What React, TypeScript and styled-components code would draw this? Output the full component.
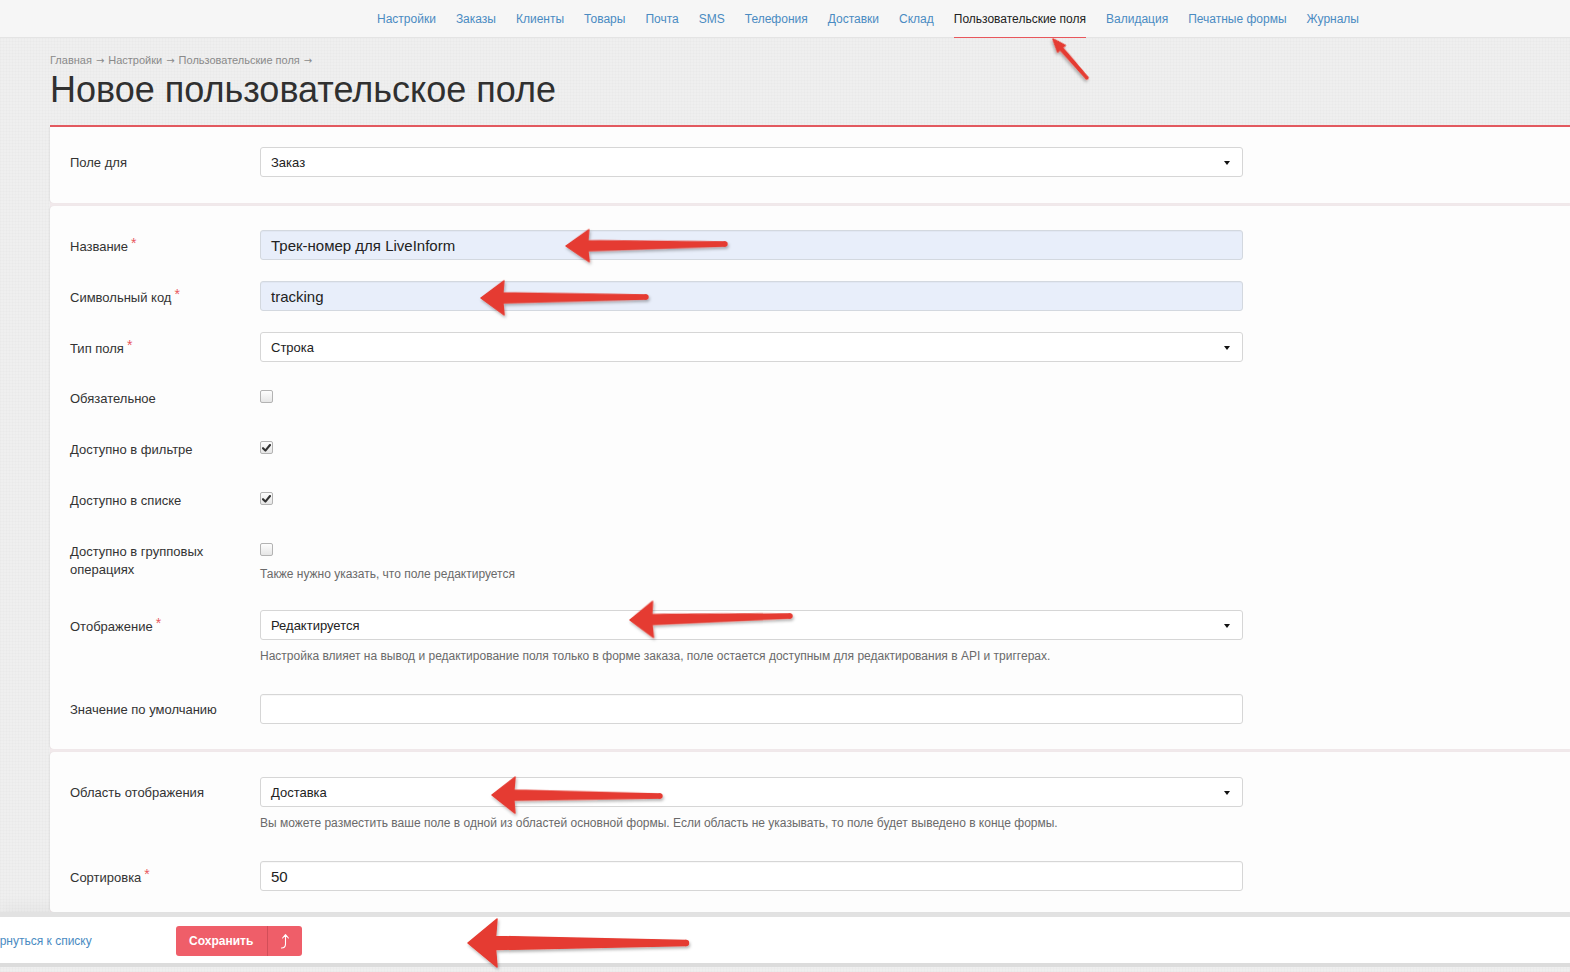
import React from "react";
import styled, { createGlobalStyle, css } from "styled-components";

const GlobalStyle = createGlobalStyle`
  html, body { margin: 0; padding: 0; }
  body {
    background: #efefef;
    background-image:
      repeating-linear-gradient(0deg, rgba(0,0,0,0.012) 0 1px, transparent 1px 3px),
      repeating-linear-gradient(90deg, rgba(0,0,0,0.012) 0 1px, transparent 1px 3px);
    font-family: "Liberation Sans", Arial, sans-serif;
    color: #333;
    overflow: hidden;
  }
  * { box-sizing: border-box; }
`;

const Page = styled.div`
  position: relative;
  width: 1570px;
  height: 972px;
  overflow: hidden;
`;

const TopNav = styled.nav`
  height: 38px;
  background: #f6f6f6;
  border-bottom: 1px solid #e4e4e4;
  display: flex;
  justify-content: flex-end;
  align-items: stretch;
  padding-right: 211px;
  gap: 20px;
`;

const NavLink = styled.a<{ $active?: boolean }>`
  display: flex;
  align-items: center;
  font-size: 12px;
  color: #4a8bc2;
  text-decoration: none;
  padding-top: 1px;
  border-bottom: 1px solid transparent;
  margin-bottom: -1px;
  ${(p) =>
    p.$active &&
    css`
      color: #222;
      border-bottom-color: #e8575c;
    `}
`;

const Header = styled.header`
  padding: 15px 0 0 50px;
`;

const Breadcrumb = styled.div`
  font-size: 11px;
  line-height: 14px;
  height: 14px;
  color: #8a8a8a;
  white-space: nowrap;
`;

const CrumbArrow = styled.span`
  font-family: "DejaVu Sans", sans-serif;
  font-size: 10px;
  line-height: 10px;
  margin: 0 4px;
`;

const Title = styled.h1`
  margin: 3px 0 15px;
  font-size: 36px;
  line-height: 40px;
  font-weight: normal;
  color: #303030;
`;

const Cards = styled.div`
  margin-left: 50px;
  border-top: 2px solid #e35a60;
  background: #f1e9eb;
  display: flex;
  flex-direction: column;
  gap: 3px;
`;

const Card = styled.section<{ $pt: number; $pb: number; $first?: boolean }>`
  background: #fdfdfd;
  padding: ${(p) => p.$pt}px 0 ${(p) => p.$pb}px;
  border-radius: ${(p) => (p.$first ? "0 0 0 4px" : "4px 0 0 4px")};
  box-shadow: -1px 0 1px rgba(0, 0, 0, 0.05);
`;

const Group = styled.div`
  display: grid;
  grid-template-columns: 190px 983px;
  padding-left: 20px;
  margin-bottom: 21px;
`;

const Label = styled.label`
  font-size: 13px;
  line-height: 18px;
  padding-top: 7px;
  color: #333;
  padding-right: 20px;
`;

const Req = styled.span`
  color: #e8585e;
  font-size: 14px;
  position: relative;
  top: -3px;
  margin-left: 3px;
`;

const Control = styled.div`
  display: flex;
  flex-direction: column;
`;

const TextInput = styled.div<{ $filled?: boolean }>`
  height: 30px;
  border: 1px solid ${(p) => (p.$filled ? "#d3d8df" : "#d6d6d6")};
  border-radius: 3px;
  background: ${(p) => (p.$filled ? "#e8eefa" : "#fff")};
  font-size: 15px;
  color: #222;
  display: flex;
  align-items: center;
  padding: 0 10px;
  box-shadow: inset 0 1px 1px rgba(0, 0, 0, 0.03);
`;

const Select = styled.div`
  height: 30px;
  border: 1px solid #d6d6d6;
  border-radius: 3px;
  background: #fff;
  font-size: 13px;
  color: #222;
  display: flex;
  align-items: center;
  justify-content: space-between;
  padding: 0 12px 0 10px;
`;

const Caret = styled.span`
  width: 0;
  height: 0;
  border-left: 3.5px solid transparent;
  border-right: 3.5px solid transparent;
  border-top: 4px solid #111;
  margin-top: 1px;
`;

const CheckWrap = styled.div`
  height: 30px;
  padding-top: 7px;
`;

const Checkbox = styled.span`
  display: flex;
  align-items: center;
  justify-content: center;
  width: 13px;
  height: 13px;
  border: 1px solid #b3b3b3;
  border-radius: 2px;
  background: linear-gradient(#fdfdfd, #e6e6e6);
`;

const Help = styled.div<{ $mt: number; $mb: number }>`
  font-size: 12px;
  line-height: 17px;
  color: #6a6a6a;
  margin-top: ${(p) => p.$mt}px;
  margin-bottom: ${(p) => p.$mb}px;
`;

const Footer = styled.footer`
  background: #fff;
  border-top: 5px solid #e2e2e2;
  border-bottom: 4px solid #dcdcdc;
  height: 55px;
  display: flex;
  align-items: center;
  padding-top: 2px;
  box-shadow: 0 -8px 12px rgba(0, 0, 0, 0.03);
`;

const BackLink = styled.a`
  font-size: 12px;
  color: #4a8bc2;
  margin-left: -15px;
  margin-right: 84px;
  text-decoration: none;
  white-space: nowrap;
`;

const SaveGroup = styled.div`
  display: flex;
  height: 30px;
  border-radius: 3px;
  overflow: hidden;
  background: #ef5e69;
`;

const SaveButton = styled.button`
  width: 92px;
  border: none;
  background: transparent;
  color: #fff;
  font-family: "Liberation Sans", Arial, sans-serif;
  font-weight: bold;
  font-size: 12px;
  padding: 0;
  border-right: 1px solid #d24e58;
`;

const ExtraButton = styled.button`
  width: 34px;
  border: none;
  background: transparent;
  display: flex;
  align-items: center;
  justify-content: center;
  padding: 0;
`;

const Overlay = styled.svg`
  position: absolute;
  top: 0;
  left: 0;
  pointer-events: none;
`;

type Pt = [number, number];
const Arrow = ({
  tip,
  tail,
  h,
  hl,
  w1,
  w2,
}: {
  tip: Pt;
  tail: Pt;
  h: number;
  hl: number;
  w1: number;
  w2: number;
}) => {
  const dx = tail[0] - tip[0];
  const dy = tail[1] - tip[1];
  const L = Math.sqrt(dx * dx + dy * dy);
  const ang = (Math.atan2(dy, dx) * 180) / Math.PI;
  const n = hl * 0.95;
  const pts = [
    [0, 0],
    [hl, -h],
    [n, -w1 / 2],
    [L, -w2 / 2],
    [L, w2 / 2],
    [n, w1 / 2],
    [hl, h],
  ]
    .map((p) => p.join(","))
    .join(" ");
  return (
    <g transform={`translate(${tip[0]} ${tip[1]}) rotate(${ang})`} filter="url(#sh)">
      <polygon points={pts} fill="#e53b31" stroke="#e53b31" strokeWidth={1.5} strokeLinejoin="round" />
      <circle cx={L} cy={0} r={w2 / 2 + 0.7} fill="#e53b31" />
    </g>
  );
};

const Check = () => (
  <svg width="9" height="8" viewBox="0 0 9 8">
    <path d="M1 4.2 L3.4 6.6 L8 1" fill="none" stroke="#333" strokeWidth="2.1" strokeLinecap="round" strokeLinejoin="round" />
  </svg>
);

const navItems = [
  "Настройки",
  "Заказы",
  "Клиенты",
  "Товары",
  "Почта",
  "SMS",
  "Телефония",
  "Доставки",
  "Склад",
  "Пользовательские поля",
  "Валидация",
  "Печатные формы",
  "Журналы",
];

const crumbs = ["Главная", "Настройки", "Пользовательские поля"];

export default function App() {
  return (
    <Page>
      <GlobalStyle />
      <TopNav>
        {navItems.map((n) => (
          <NavLink key={n} $active={n === "Пользовательские поля"}>
            {n}
          </NavLink>
        ))}
      </TopNav>
      <Header>
        <Breadcrumb>
          {crumbs.map((c) => (
            <React.Fragment key={c}>
              {c}
              <CrumbArrow>→</CrumbArrow>
            </React.Fragment>
          ))}
        </Breadcrumb>
        <Title>Новое пользовательское поле</Title>
      </Header>
      <Cards>
        <Card $pt={20} $pb={5} $first>
          <Group>
            <Label>Поле для</Label>
            <Control>
              <Select>
                Заказ <Caret />
              </Select>
            </Control>
          </Group>
        </Card>
        <Card $pt={24} $pb={4}>
          <Group>
            <Label>
              Название<Req>*</Req>
            </Label>
            <Control>
              <TextInput $filled>Трек-номер для LiveInform</TextInput>
            </Control>
          </Group>
          <Group>
            <Label>
              Символьный код<Req>*</Req>
            </Label>
            <Control>
              <TextInput $filled>tracking</TextInput>
            </Control>
          </Group>
          <Group>
            <Label>
              Тип поля<Req>*</Req>
            </Label>
            <Control>
              <Select>
                Строка <Caret />
              </Select>
            </Control>
          </Group>
          <Group>
            <Label>Обязательное</Label>
            <CheckWrap>
              <Checkbox />
            </CheckWrap>
          </Group>
          <Group>
            <Label>Доступно в фильтре</Label>
            <CheckWrap>
              <Checkbox>
                <Check />
              </Checkbox>
            </CheckWrap>
          </Group>
          <Group>
            <Label>Доступно в списке</Label>
            <CheckWrap>
              <Checkbox>
                <Check />
              </Checkbox>
            </CheckWrap>
          </Group>
          <Group>
            <Label>Доступно в групповых операциях</Label>
            <Control>
              <CheckWrap>
                <Checkbox />
              </CheckWrap>
              <Help $mt={0} $mb={6}>Также нужно указать, что поле редактируется</Help>
            </Control>
          </Group>
          <Group>
            <Label>
              Отображение<Req>*</Req>
            </Label>
            <Control>
              <Select>
                Редактируется <Caret />
              </Select>
              <Help $mt={8} $mb={8}>
                Настройка влияет на вывод и редактирование поля только в форме заказа, поле остается доступным для
                редактирования в API и триггерах.
              </Help>
            </Control>
          </Group>
          <Group>
            <Label>Значение по умолчанию</Label>
            <Control>
              <TextInput />
            </Control>
          </Group>
        </Card>
        <Card $pt={25} $pb={0}>
          <Group>
            <Label>Область отображения</Label>
            <Control>
              <Select>
                Доставка <Caret />
              </Select>
              <Help $mt={8} $mb={8}>
                Вы можете разместить ваше поле в одной из областей основной формы. Если область не указывать, то поле
                будет выведено в конце формы.
              </Help>
            </Control>
          </Group>
          <Group>
            <Label>
              Сортировка<Req>*</Req>
            </Label>
            <Control>
              <TextInput>50</TextInput>
            </Control>
          </Group>
        </Card>
      </Cards>
      <Footer>
        <BackLink>Вернуться к списку</BackLink>
        <SaveGroup>
          <SaveButton>Сохранить</SaveButton>
          <ExtraButton>
            <svg width="12" height="18" viewBox="0 0 12 18">
              <path
                d="M2.5 16 Q6.5 16 6.5 12 L6.5 3 M3.6 6 L6.5 2.6 L9.4 6"
                fill="none"
                stroke="#fff"
                strokeWidth="1.1"
                strokeLinecap="round"
                strokeLinejoin="round"
              />
            </svg>
          </ExtraButton>
        </SaveGroup>
      </Footer>
      <Overlay width={1570} height={972} viewBox="0 0 1570 972">
        <defs>
          <filter id="sh" x="-20%" y="-50%" width="140%" height="200%">
            <feDropShadow dx="1" dy="2" stdDeviation="1.5" floodColor="#000" floodOpacity="0.3" />
          </filter>
        </defs>
        <Arrow tip={[1053, 39]} tail={[1087, 78]} h={5} hl={13} w1={3.5} w2={2} />
        <Arrow tip={[566, 246]} tail={[725, 244]} h={16} hl={23} w1={10} w2={4} />
        <Arrow tip={[481, 298]} tail={[646, 297]} h={17} hl={23} w1={10} w2={4} />
        <Arrow tip={[630, 620]} tail={[790, 616]} h={18} hl={23} w1={10} w2={4} />
        <Arrow tip={[492, 795]} tail={[660, 796]} h={18} hl={23} w1={10} w2={4} />
        <Arrow tip={[468, 943]} tail={[686, 943]} h={24} hl={29} w1={13} w2={5} />
      </Overlay>
    </Page>
  );
}
